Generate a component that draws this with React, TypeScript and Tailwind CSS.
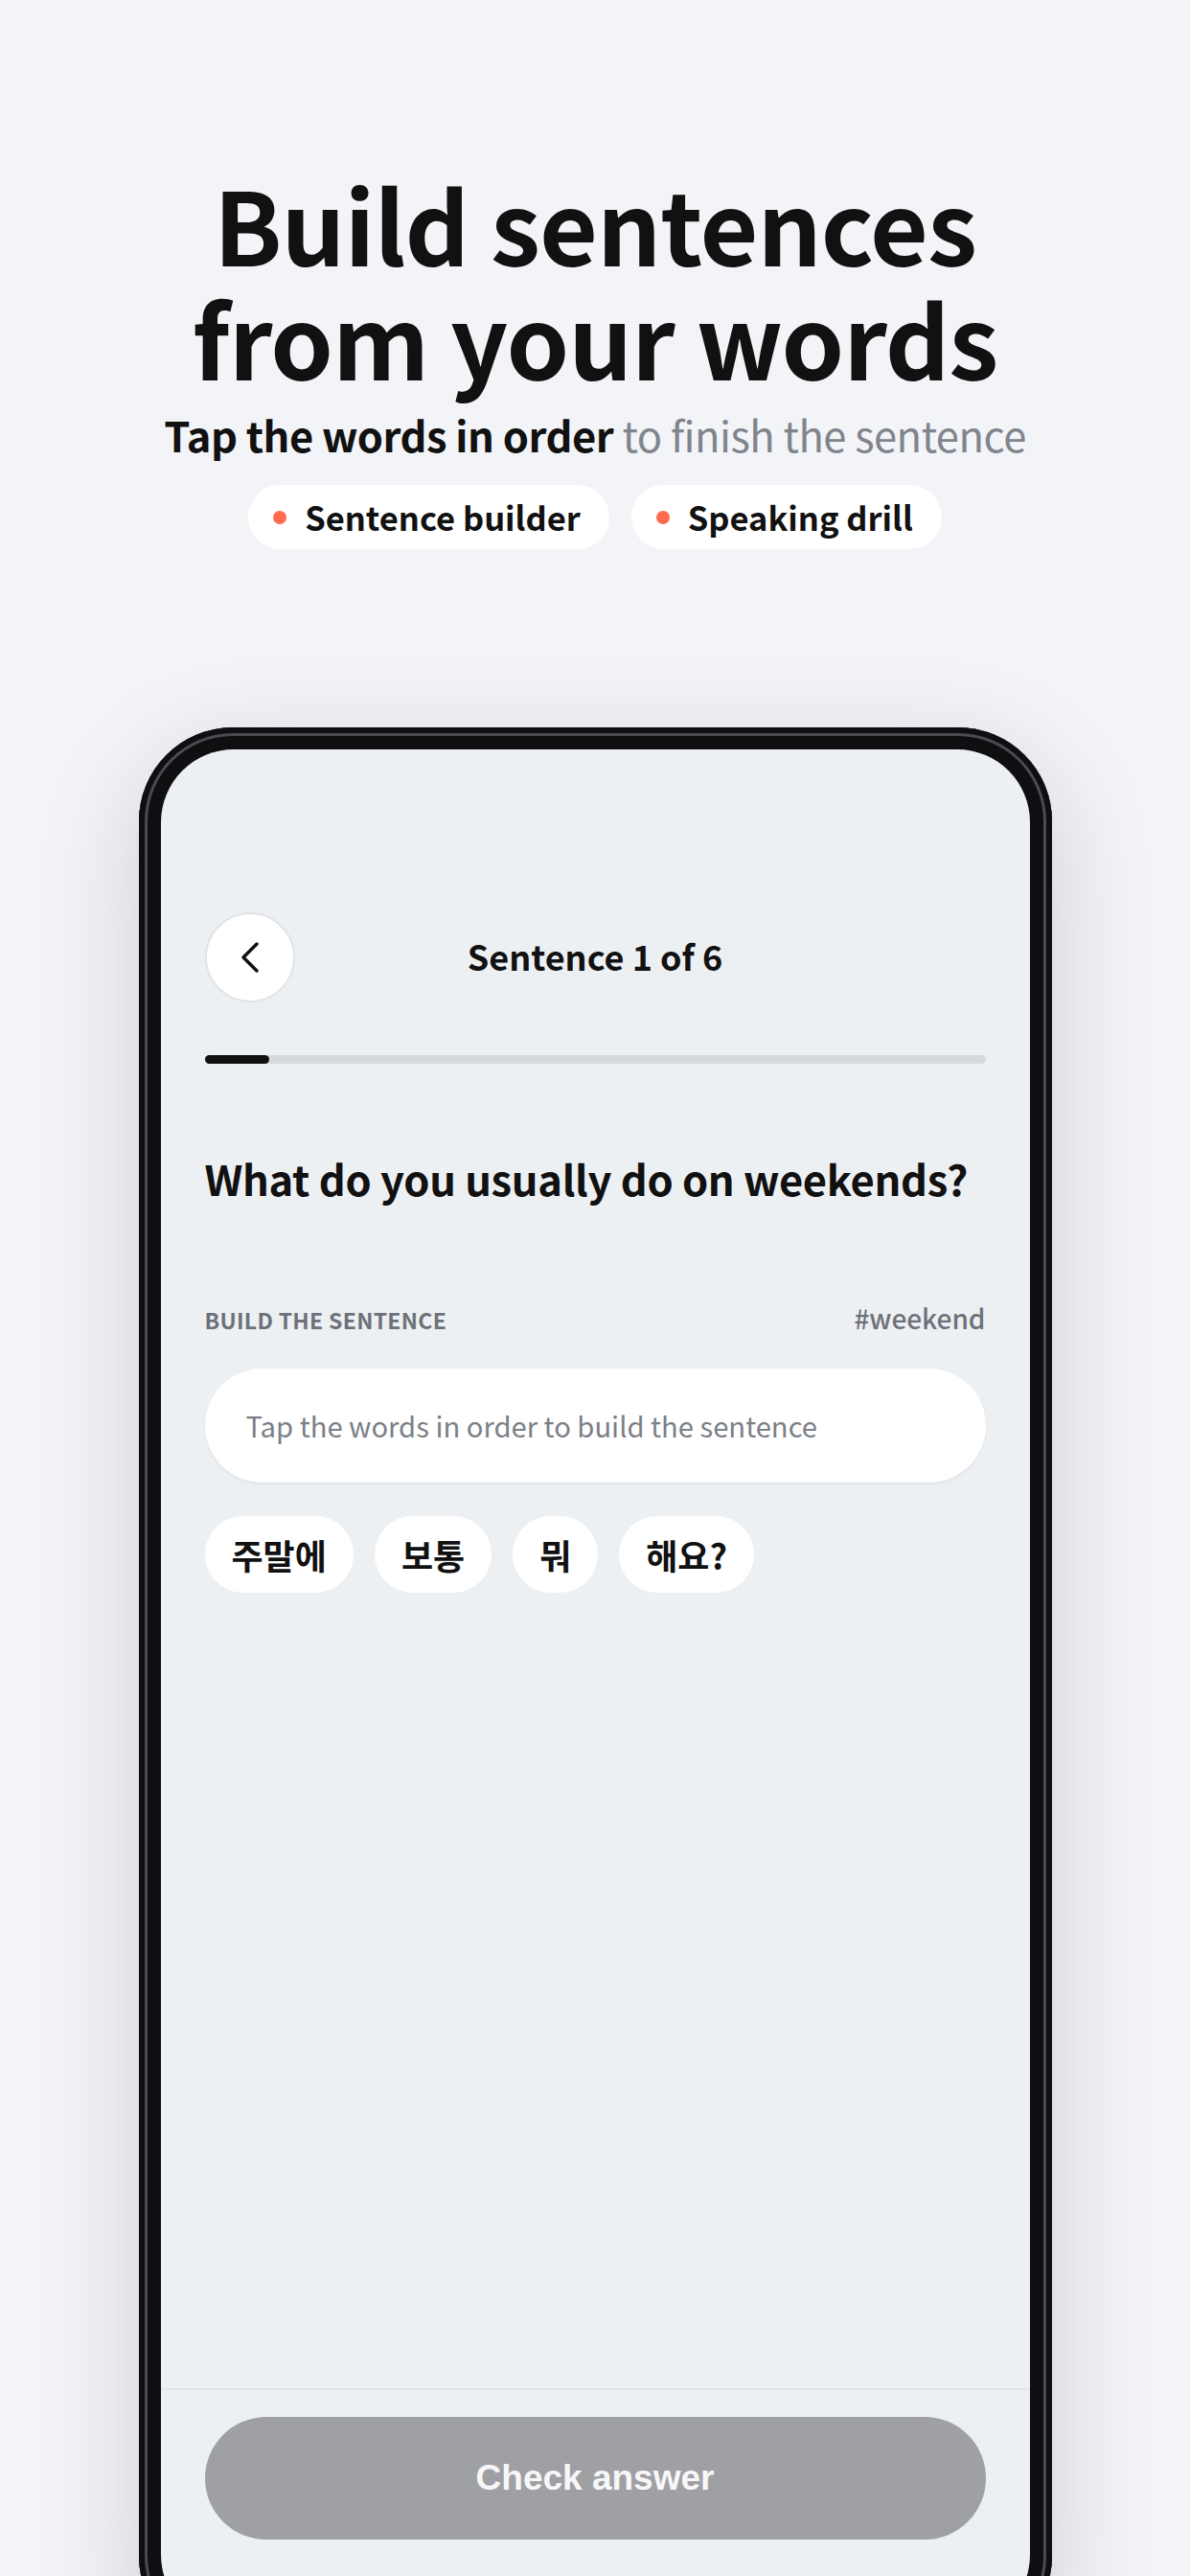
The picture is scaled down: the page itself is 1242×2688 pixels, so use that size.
import React from 'react';

const words = ['주말에', '보통', '뭐', '해요?'];

function BackChevron() {
  return (
    <svg width="20" height="32" viewBox="0 0 20 32" fill="none">
      <path d="M17 2 L3 16 L17 30" stroke="#111" strokeWidth="3.4" strokeLinecap="round" strokeLinejoin="round" />
    </svg>
  );
}

function Pill({ label }: { label: string }) {
  return (
    <div className="flex h-[67px] items-center gap-[19px] rounded-full bg-white pl-[26px] pr-[30px]">
      <span className="h-[14px] w-[14px] rounded-full bg-[#ff6a50]" />
      <span className="text-[34.5px] font-bold text-[#111]">{label}</span>
    </div>
  );
}

export default function App() {
  return (
    <div className="h-[2688px] overflow-hidden bg-[#f3f4f8] font-['Noto_Sans_CJK_KR','Noto_Sans',sans-serif] text-[#111]">
      {/* hero */}
      <div className="flex flex-col items-center pt-[173px] text-center">
        <h1 className="text-[105px] font-bold leading-[119px] tracking-[-1px] text-[#111]">
          Build sentences
          <br />
          from your words
        </h1>
        <p className="mt-[13px] text-[43.5px] leading-[60px] tracking-[-0.5px]">
          <span className="font-bold text-[#111]">Tap the words in order</span>{' '}
          <span className="text-[#80848c]">to finish the sentence</span>
        </p>
        <div className="mt-[22px] flex gap-[23px]">
          <Pill label="Sentence builder" />
          <Pill label="Speaking drill" />
        </div>
      </div>

      {/* phone */}
      <div className="mt-[186px] flex justify-center">
        <div className="rounded-[98px] bg-[#0f0f11] p-[23px] shadow-[inset_0_0_0_6px_#0f0f11,inset_0_0_0_9px_#4a4a52,0_30px_110px_rgba(20,25,40,0.16)]">
          <div className="flex h-[1960px] w-[907px] flex-col overflow-hidden rounded-[76px] bg-[#edf0f3]">
            <div className="flex-1 px-[46px] pt-[170px]">
              <div className="grid grid-cols-[94px_1fr_94px] items-center">
                <button className="flex h-[94px] w-[94px] items-center justify-center rounded-full border-2 border-[#e1e3e7] bg-white">
                  <BackChevron />
                </button>
                <div className="mb-[4px] text-center text-[36px] font-bold">Sentence 1 of 6</div>
                <div />
              </div>

              <div className="mt-[55px] h-[9px] w-full rounded-full bg-[#d7dadd]">
                <div className="h-full w-[67px] rounded-full bg-[#111]" />
              </div>

              <h2 className="mt-[90px] whitespace-nowrap text-[43.5px] font-bold leading-[60px] tracking-[-0.3px]">
                What do you usually do on weekends?
              </h2>

              <div className="mt-[94px] flex items-baseline justify-between">
                <span className="text-[23px] font-bold tracking-[0.3px] text-[#6d7179]">BUILD THE SENTENCE</span>
                <span className="text-[28px] font-medium text-[#6d7179]">#weekend</span>
              </div>

              <div className="mt-[32px] flex h-[119px] items-center rounded-full bg-white px-[43px] shadow-[0_2px_3px_rgba(0,0,0,0.05)]">
                <span className="text-[29.2px] text-[#7b7f87]">Tap the words in order to build the sentence</span>
              </div>

              <div className="mt-[35px] flex flex-wrap gap-[22px]">
                {words.map(w => (
                  <button key={w} className="flex h-[80px] items-center rounded-full bg-white px-[28px] text-[36px] font-bold text-[#111]">
                    {w}
                  </button>
                ))}
              </div>
            </div>

            <div className="h-[250px] border-t-2 border-[#e1e4e7] px-[46px] pt-[28px]">
              <button className="flex h-[128px] w-full items-center justify-center rounded-full bg-[#9fa0a4] font-['Liberation_Sans',Arial,sans-serif] text-[37px] font-bold text-[#f7f7f8]">
                Check answer
              </button>
            </div>
          </div>
        </div>
      </div>
    </div>
  );
}
